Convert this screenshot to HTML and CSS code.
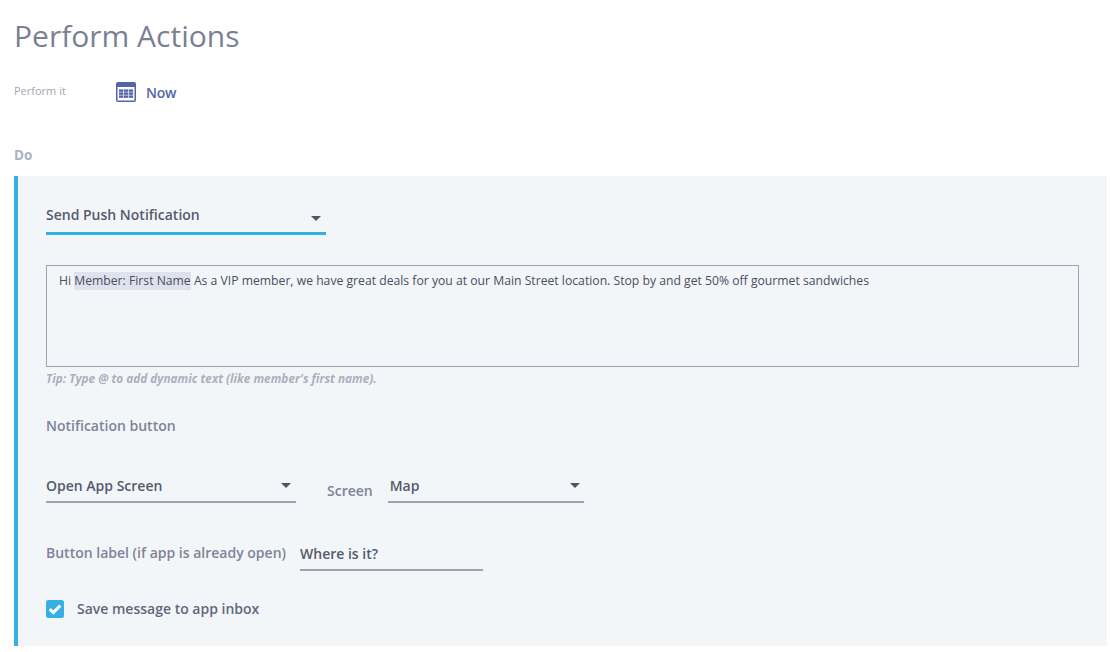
FILE: index.html
```html
<!DOCTYPE html>
<html lang="en">
<head>
<meta charset="utf-8">
<title>Perform Actions</title>
<link rel="stylesheet" href="styles.css">
</head>
<body>
<main class="page">
  <h1 class="title">Perform Actions</h1>
  <div class="when">
    <span class="when-label">Perform it</span>
    <span class="when-value">
      <svg class="cal" width="20" height="20" viewBox="0 0 20 20" aria-hidden="true">
        <rect x="0" y="0" width="20" height="20" rx="2" fill="#5264ab"/>
        <rect x="1.5" y="5" width="17" height="13.5" fill="#fff"/>
        <g fill="#5264ab">
          <rect x="3" y="7.4" width="4.3" height="2.4"/><rect x="7.9" y="7.4" width="4.3" height="2.4"/><rect x="12.8" y="7.4" width="4.3" height="2.4"/>
          <rect x="3" y="10.4" width="4.3" height="2.4"/><rect x="7.9" y="10.4" width="4.3" height="2.4"/><rect x="12.8" y="10.4" width="4.3" height="2.4"/>
          <rect x="3" y="13.4" width="4.3" height="2.4"/><rect x="7.9" y="13.4" width="4.3" height="2.4"/><rect x="12.8" y="13.4" width="4.3" height="2.4"/>
        </g>
      </svg>
      Now
    </span>
  </div>
  <h2 class="do">Do</h2>
  <section class="panel">
    <div class="select select-main"><span>Send Push Notification</span><i class="caret"></i></div>
    <div class="message">Hi <span class="token">Member: First Name</span> As a VIP member, we have great deals for you at our Main Street location. Stop by and get 50% off gourmet sandwiches</div>
    <p class="tip">Tip: Type @ to add dynamic text (like member's first name).</p>
    <h3 class="section-label">Notification button</h3>
    <div class="row-selects">
      <div class="select select-action"><span>Open App Screen</span><i class="caret"></i></div>
      <span class="field-label screen-label">Screen</span>
      <div class="select select-screen"><span>Map</span><i class="caret"></i></div>
    </div>
    <div class="row-label">
      <span class="field-label">Button label (if app is already open)</span>
      <div class="text-input">Where is it?</div>
    </div>
    <div class="check-row">
      <svg class="check" width="18" height="18" viewBox="0 0 18 18" aria-hidden="true">
        <rect width="18" height="18" rx="2.5" fill="#35b0e4"/>
        <path d="M3.8 9.2 7.3 12.6 14.2 5.6" fill="none" stroke="#fff" stroke-width="3"/>
      </svg>
      <span>Save message to app inbox</span>
    </div>
  </section>
</main>
</body>
</html>
```
FILE: styles.css
```css
* { box-sizing: border-box; }
html, body { margin: 0; padding: 0; background: #fff; }
body { font-family: "Open Sans", "Liberation Sans", sans-serif; color: #4f5368; overflow: hidden; }
.page { width: 1110px; height: 652px; padding: 0 3px 0 14px; }
.title { margin: 0; padding-top: 15px; font-size: 30px; line-height: 41px; font-weight: 400; color: #7b7f93; }
.when { display: flex; align-items: center; height: 24px; margin-top: 24px; }
.when-label { width: 102px; font-size: 11px; color: #a9a3b2; position: relative; top: -2px; }
.when-value { display: flex; align-items: center; gap: 10px; font-size: 14px; font-weight: 600; letter-spacing: -0.2px; color: #5566aa; }
.cal { display: block; }
.do { margin: 42px 0 0; font-size: 13.5px; line-height: 18px; font-weight: 700; color: #aeb0c0; }
.panel { height: 470px; margin-top: 12px; padding: 28px 28px 0 28px; background: #f3f6f9; border-left: 4px solid #35b0e4; }
.select { display: flex; align-items: center; justify-content: space-between; font-size: 14px; font-weight: 600; color: #555a6e; border-bottom: 2px solid #9fa1b5; }
.select-main { width: 280px; height: 31px; padding: 0 5px 6px 0; border-bottom: 3px solid #35b0e4; }
.select-main span { position: relative; top: -1px; }
.caret { display: block; width: 0; height: 0; border-left: 5.5px solid transparent; border-right: 5.5px solid transparent; border-top: 5px solid #4f5368; }
.select-main .caret { margin-top: 6px; }
.message { height: 102px; margin-top: 30px; width: 1033px; padding: 6px 12px; font-size: 12.2px; line-height: 18px; color: #4a4e60; border: 1px solid #9fa1b5; }
.token { display: inline-block; background: #dfe2ed; line-height: 18px; }
.tip { margin: 4px 0 0; font-size: 11.8px; line-height: 15px; font-style: italic; font-weight: 700; color: #adafbe; }
.section-label { margin: 30px 0 0; font-size: 14px; line-height: 19px; font-weight: 600; color: #7f8398; }
.row-selects { display: flex; align-items: flex-end; margin-top: 36px; }
.select-action { width: 250px; height: 32px; padding: 0 5px 1px 0; }
.select-screen { width: 196px; height: 32px; padding: 0 4px 1px 2px; }
.screen-label { margin: 0 15px 3px 31px; }
.field-label { font-size: 14px; font-weight: 600; color: #7f8398; line-height: 19px; }
.row-label { display: flex; align-items: center; margin-top: 34px; }
.row-label .field-label { width: 254px; padding-bottom: 4px; }
.text-input { width: 183px; height: 34px; padding: 7px 0 0 0; font-size: 14px; font-weight: 600; line-height: 19px; color: #555a6e; border-bottom: 2px solid #9fa1b5; }
.check-row { display: flex; align-items: center; gap: 13px; margin-top: 28px; font-size: 14px; font-weight: 600; color: #62667b; }
.check { display: block; }
```
